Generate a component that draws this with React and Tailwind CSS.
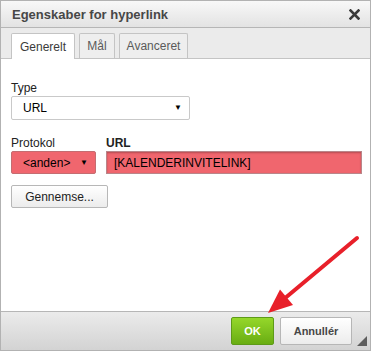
import React from "react";

export default function App() {
  const font = { fontFamily: '"Liberation Sans", Arial, Helvetica, sans-serif' };
  return (
    <div className="relative w-[372px] h-[351px] bg-white" style={font}>
      <div className="flex flex-col w-[371px] h-[351px] border border-[#b2b2b2]">
        {/* Title bar */}
        <div className="flex items-center justify-between h-[27px] px-[11px] bg-gradient-to-b from-[#f8f8f8] to-[#e3e3e3] border-b border-[#b6b6b6] shrink-0">
          <span className="text-[13px] font-bold text-[#474747] leading-none">Egenskaber for hyperlink</span>
          <svg width="11" height="11" viewBox="0 0 11 11" className="mr-[-1px]">
            <path d="M1.5 1.5 L9.5 9.5 M9.5 1.5 L1.5 9.5" stroke="#3a3a3a" strokeWidth="2.6" strokeLinecap="square" />
          </svg>
        </div>
        {/* Tabs */}
        <div className="flex items-end gap-[4px] h-[31px] pl-[10px] bg-[#ebebeb] border-b border-[#c4c4c4] shrink-0">
          <div className="flex items-center justify-center w-[64px] h-[26px] -mb-px bg-white border border-b-0 border-[#c4c4c4] rounded-t-[2px] text-[12px] text-[#3b3b3b]">
            Generelt
          </div>
          <div className="flex items-center justify-center w-[36px] h-[25px] bg-[#eeeeee] border border-b-0 border-[#c4c4c4] rounded-t-[2px] text-[12px] text-[#5a5a5a]">
            Mål
          </div>
          <div className="flex items-center justify-center w-[69px] h-[25px] bg-[#eeeeee] border border-b-0 border-[#c4c4c4] rounded-t-[2px] text-[12px] text-[#5a5a5a]">
            Avanceret
          </div>
        </div>
        {/* Content */}
        <div className="flex-1 flex flex-col px-[10px] pt-[22px] text-[12px] text-[#222]">
          <div className="leading-[15px]">Type</div>
          <div className="flex items-center justify-between w-[179px] h-[24px] pl-[11px] pr-[7px] border border-[#c9c9c9] rounded-[2px] bg-white text-[12px] text-black">
            <span>URL</span>
            <span className="text-[8px] leading-none">▼</span>
          </div>
          <div className="flex gap-[10px] mt-[15px]">
            <div className="flex flex-col">
              <div className="leading-[16px]">Protokol</div>
              <div className="flex items-center justify-between w-[85px] h-[23px] pl-[11px] pr-[7px] border border-[#c46d71] rounded-[2px] bg-[#f0666e] text-black">
                <span>&lt;anden&gt;</span>
                <span className="text-[8px] leading-none">▼</span>
              </div>
            </div>
            <div className="flex flex-col">
              <div className="leading-[16px] font-bold">URL</div>
              <div className="flex items-center w-[256px] h-[23px] pl-[7px] border border-[#b9868a] bg-[#f0666e] shadow-[inset_0_1px_2px_rgba(0,0,0,0.25)] text-black">
                [KALENDERINVITELINK]
              </div>
            </div>
          </div>
          <div className="mt-[11px] flex items-center justify-center w-[97px] h-[23px] border border-[#b7b7b7] rounded-[2px] bg-gradient-to-b from-white to-[#ececec] text-[#222]">
            Gennemse...
          </div>
        </div>
        {/* Footer */}
        <div className="relative flex items-center justify-end gap-[6px] h-[39px] pr-[18px] bg-gradient-to-b from-[#ebebeb] to-[#d3d3d3] border-t border-[#b6b6b6] shrink-0">
          <div className="flex items-center justify-center w-[43px] h-[28px] border border-[#5d9a18] rounded-[2px] bg-gradient-to-b from-[#95d72a] to-[#69ad12] text-white text-[11px] font-bold">
            OK
          </div>
          <div className="flex items-center justify-center w-[72px] h-[28px] border border-[#b6b6b6] rounded-[2px] bg-gradient-to-b from-white to-[#ececec] text-[#474747] text-[11px] font-bold">
            Annullér
          </div>
          <svg width="10" height="10" viewBox="0 0 10 10" className="absolute right-[3px] bottom-[4px]">
            <path d="M10 0 L10 10 L0 10 Z" fill="#5d5d5d" />
          </svg>
        </div>
      </div>
      {/* Red arrow overlay */}
      <svg className="absolute left-0 top-0 pointer-events-none" width="372" height="351" viewBox="0 0 372 351">
        <line x1="357" y1="238" x2="284" y2="299" stroke="#e8202a" strokeWidth="4" strokeLinecap="round" />
        <path d="M268 313 L280 289.5 L293 305 Z" fill="#e8202a" />
      </svg>
    </div>
  );
}
